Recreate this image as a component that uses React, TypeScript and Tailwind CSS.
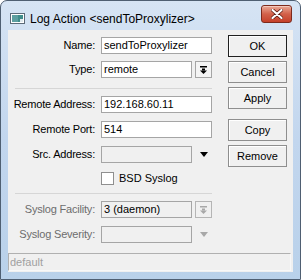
import React from 'react';

const ui = "font-['Liberation_Sans',Arial,sans-serif]";

function DropIcon({ color }: { color: string }) {
  return (
    <svg width="7" height="8" viewBox="0 0 7 8">
      <rect x="0" y="0" width="7" height="1.5" fill={color} />
      <rect x="2" y="2.5" width="3" height="2" fill={color} />
      <path d="M0 4.5 H7 L3.5 8 Z" fill={color} />
    </svg>
  );
}

function Arrow({ color }: { color: string }) {
  return (
    <svg width="8" height="5" viewBox="0 0 8 5">
      <path d="M0 0 H8 L4 5 Z" fill={color} />
    </svg>
  );
}

function Label({ text, disabled }: { text: string; disabled?: boolean }) {
  return (
    <div
      className={`w-[87px] text-right text-[11px] leading-[17px] tracking-[-0.2px] ${
        disabled ? 'text-[#6d6d6d]' : 'text-black'
      }`}
    >
      {text}
    </div>
  );
}

function Field({ value, width, disabled }: { value?: string; width: string; disabled?: boolean }) {
  return (
    <div
      className={`${width} h-[17px] border border-[#a5a5a5] pl-[2px] text-[11px] leading-[15px] text-black ${
        disabled ? 'bg-[#f0f0f0]' : 'bg-white'
      }`}
    >
      {value}
    </div>
  );
}

function Btn({ text, main, className = '' }: { text: string; main?: boolean; className?: string }) {
  return (
    <div
      className={`h-[22px] w-[59px] flex items-center justify-center border text-[11px] text-black bg-[#f0f0f0] shadow-[inset_1px_1px_0_#ffffff] ${
        main ? 'border-[#202020]' : 'border-[#8e8e8e]'
      } ${className}`}
    >
      {text}
    </div>
  );
}

export default function App() {
  return (
    <div className={`w-[301px] h-[280px] bg-white ${ui}`}>
      <div className="w-[301px] h-[280px] flex flex-col rounded-t-[7px] border border-[#4f5f72] bg-gradient-to-b from-[#d6e4f4] via-[#c2d6ee] to-[#b9d1ea] px-[7px] pb-[7px]">
        {/* title bar */}
        <div className="h-[29px] flex items-start">
          <svg className="mt-[12px] ml-[2px]" width="15" height="11" viewBox="0 0 15 11">
            <rect x="0.5" y="0.5" width="14" height="10" fill="#ffffff" stroke="#5c6a78" />
            <rect x="2" y="2" width="11" height="7" fill="#3f8c8a" />
            <rect x="2" y="2" width="6" height="7" fill="#5c9fa0" />
            <rect x="10" y="6" width="3" height="3" fill="#dfe9ee" />
          </svg>
          <div className="ml-[5px] mt-[10px] text-[12px] leading-[16px] text-black">Log Action &lt;sendToProxylizer&gt;</div>
          <div className="ml-auto mr-[1px] mt-[4px] w-[31px] h-[18px] rounded-[3px] border border-[#7d2a1c] bg-gradient-to-b from-[#e9a997] via-[#d2614a] to-[#c5402a] shadow-[inset_0_1px_0_#f4c8bb] flex items-center justify-center">
            <svg width="12" height="10" viewBox="0 0 12 10">
              <path d="M1.5 1 L10.5 9 M10.5 1 L1.5 9" stroke="#5a1a10" strokeWidth="3.6" strokeLinecap="round" />
              <path d="M1.5 1 L10.5 9 M10.5 1 L1.5 9" stroke="#ffffff" strokeWidth="2.2" strokeLinecap="round" />
            </svg>
          </div>
        </div>

        {/* client area */}
        <div className="flex-1 bg-[#f0f0f0] flex flex-col">
          <div className="flex">
            <div className="w-[212px] flex flex-col">
              <div className="mt-[7px] flex gap-[6px]">
                <Label text="Name:" />
                <Field value="sendToProxylizer" width="w-[111px]" />
              </div>
              <div className="mt-[7px] flex gap-[6px]">
                <Label text="Type:" />
                <Field value="remote" width="w-[91px]" />
                <div className="ml-[-3px] w-[17px] h-[17px] border border-[#a5a5a5] bg-[#f4f4f4] flex items-center justify-center">
                  <DropIcon color="#000000" />
                </div>
              </div>
              <div className="mt-[10px] ml-[7px] w-[197px] h-px bg-[#d6d6d6]" />
              <div className="mt-[7px] flex gap-[6px]">
                <Label text="Remote Address:" />
                <Field value="192.168.60.11" width="w-[111px]" />
              </div>
              <div className="mt-[8px] flex gap-[6px]">
                <Label text="Remote Port:" />
                <Field value="514" width="w-[111px]" />
              </div>
              <div className="mt-[8px] flex gap-[6px]">
                <Label text="Src. Address:" />
                <Field width="w-[91px]" disabled />
                <div className="ml-[-3px] w-[17px] h-[17px] flex items-center justify-center">
                  <Arrow color="#000000" />
                </div>
              </div>
              <div className="mt-[9px] ml-[93px] flex items-center gap-[5px]">
                <div className="w-[13px] h-[13px] border border-[#8f8f8f] bg-white" />
                <span className="text-[11px] leading-[13px] text-black">BSD Syslog</span>
              </div>
              <div className="mt-[8px] ml-[7px] w-[197px] h-px bg-[#d6d6d6]" />
              <div className="mt-[7px] flex gap-[6px]">
                <Label text="Syslog Facility:" disabled />
                <Field value="3 (daemon)" width="w-[91px]" disabled />
                <div className="ml-[-3px] w-[17px] h-[17px] border border-[#b5b5b5] bg-[#f0f0f0] flex items-center justify-center">
                  <DropIcon color="#a8a8a8" />
                </div>
              </div>
              <div className="mt-[8px] flex gap-[6px]">
                <Label text="Syslog Severity:" disabled />
                <Field width="w-[91px]" disabled />
                <div className="ml-[-3px] w-[17px] h-[17px] flex items-center justify-center">
                  <Arrow color="#a8a8a8" />
                </div>
              </div>
            </div>

            <div className="ml-[8px] mt-[5px] flex flex-col">
              <Btn text="OK" main />
              <Btn text="Cancel" className="mt-[4px]" />
              <Btn text="Apply" className="mt-[4px]" />
              <Btn text="Copy" className="mt-[10px]" />
              <Btn text="Remove" className="mt-[4px]" />
            </div>
          </div>

          <div className="mt-auto mb-[1px] mr-[2px] h-[18px] border border-[#b0b0b0] border-b-[#f8f8f8] border-r-[#f8f8f8] pl-[1px] text-[11px] leading-[16px] text-[#a0a0a0]">
            default
          </div>
        </div>
      </div>
    </div>
  );
}
